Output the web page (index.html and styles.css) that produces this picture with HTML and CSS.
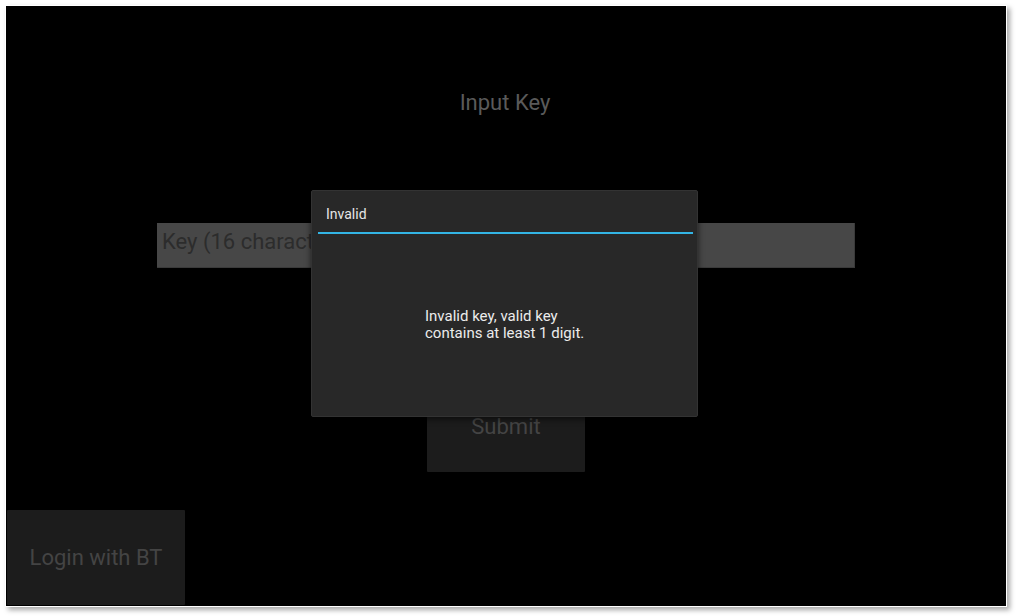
FILE: index.html
```html
<!DOCTYPE html>
<html>
<head>
<meta charset="utf-8">
<link rel="stylesheet" href="styles.css">
</head>
<body>
<div class="screen">
  <div class="title">Input Key</div>
  <div class="key-input"><span class="placeholder">Key (16 characters)</span></div>
  <div class="submit">Submit</div>
  <div class="login-bt">Login with BT</div>

  <div class="dialog">
    <div class="dialog-title">Invalid</div>
    <div class="dialog-divider"></div>
    <div class="dialog-body">Invalid key, valid key<br>contains at least 1 digit.</div>
  </div>
</div>
</body>
</html>
```

FILE: styles.css
```css
html, body {
  margin: 0;
  padding: 0;
  background: #ffffff;
}
body {
  font-family: Roboto, "Noto Sans", "Liberation Sans", sans-serif;
  width: 1016px;
  height: 616px;
  overflow: hidden;
}
.screen {
  position: relative;
  margin: 6px 0 0 6px;
  width: 1000px;
  height: 600px;
  background: #000;
  box-shadow: 0 0 0 1px #fff, 3px 3px 5px 1px rgba(0,0,0,0.35);
  display: flex;
  flex-direction: column;
  align-items: center;
  box-sizing: border-box;
  padding-top: 84px;
}
.title {
  font-size: 22px;
  line-height: 26px;
  height: 26px;
  color: #5a5a5a;
  margin-left: -2px;
}
.key-input {
  margin-top: 107px;
  width: 698px;
  height: 45px;
  box-sizing: border-box;
  background: #474747;
  border-right: 1px solid #3a3a3a;
  border-bottom: 1px solid #3a3a3a;
  padding: 6px 0 0 5px;
}
.placeholder {
  font-size: 22px;
  line-height: 26px;
  color: #2c2c2c;
}
.submit {
  margin-top: 112px;
  width: 158px;
  height: 92px;
  background: #1c1c1c;
  color: #444;
  font-size: 22px;
  display: flex;
  align-items: center;
  justify-content: center;
  border-radius: 1px;
}
.login-bt {
  margin-top: 38px;
  align-self: flex-start;
  margin-left: 1px;
  width: 178px;
  height: 95px;
  background: #1c1c1c;
  color: #444;
  font-size: 22px;
  display: flex;
  align-items: center;
  justify-content: center;
  border-radius: 1px;
}
.dialog {
  position: absolute;
  left: 305px;
  top: 184px;
  width: 387px;
  height: 227px;
  box-sizing: border-box;
  background: #282828;
  border: 1px solid #333;
  border-radius: 2px;
  box-shadow: 0 2px 6px rgba(0,0,0,0.6);
  color: #e6e6e6;
}
.dialog-title {
  font-size: 14px;
  line-height: 17px;
  padding: 15px 0 0 14px;
  height: 34px;
  box-sizing: border-box;
}
.dialog-divider {
  height: 2px;
  background: #33b5e5;
  margin: 7px 4px 0 6px;
}
.dialog-body {
  font-size: 15px;
  line-height: 17px;
  padding: 74px 0 0 113px;
  color: #ececec;
}
```
